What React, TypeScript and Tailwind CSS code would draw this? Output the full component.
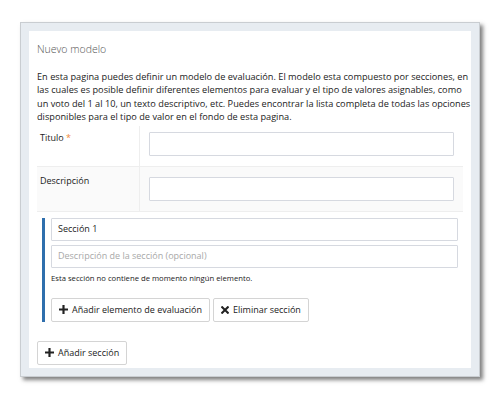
const font = { fontFamily: '"Open Sans", "Noto Sans", sans-serif' };

function PlusIcon() {
  return (
    <svg className="w-[9px] h-[9px]" viewBox="0 0 10 10" fill="#222">
      <path d="M3.8 0h2.4v3.8H10v2.4H6.2V10H3.8V6.2H0V3.8h3.8z" />
    </svg>
  );
}

function TimesIcon() {
  return (
    <svg className="w-[8px] h-[8px]" viewBox="0 0 10 10" stroke="#222" strokeWidth="2.6" strokeLinecap="square">
      <path d="M1.5 1.5l7 7M8.5 1.5l-7 7" />
    </svg>
  );
}

function Button({ icon, label }: { icon: React.ReactNode; label: string }) {
  return (
    <button className="h-[24px] px-[7px] flex items-center gap-[4px] bg-white border border-[#d4d4d4] rounded-[2px] text-[9px] text-[#222]">
      {icon}
      <span>{label}</span>
    </button>
  );
}

export default function App() {
  return (
    <div className="w-[500px] h-[397px] bg-white pt-[22px] pl-[20px]" style={font}>
      <div className="w-[460px] h-[355px] p-[8px] bg-[#e7ecf1] border border-[#c9cdd1] shadow-[3px_3px_4px_rgba(0,0,0,0.5)]">
        <div className="h-full bg-white pl-[8px] pt-[10px]">
          {/* Header */}
          <h1 className="text-[10.5px] leading-[16px] font-light text-[#555]">Nuevo modelo</h1>
          <p className="mt-[13px] w-[436px] text-[9.2px] leading-[13.4px] text-[#222]">
            En esta pagina puedes definir un modelo de evaluación. El modelo esta compuesto por secciones, en
            las cuales es posible definir diferentes elementos para evaluar y el tipo de valores asignables, como
            un voto del 1 al 10, un texto descriptivo, etc. Puedes encontrar la lista completa de todas las opciones
            disponibles para el tipo de valor en el fondo de esta pagina.
          </p>

          {/* Form table */}
          <div className="mt-[2px] w-[426px]">
            <div className="flex h-[41px] border-b border-[#eeeeee]">
              <div className="w-[103px] border-r border-[#eeeeee] pl-[3px] pt-[5px] text-[9px] font-medium text-[#222]">
                Titulo <span className="text-[#f0883a]">*</span>
              </div>
              <div className="flex-1 pl-[9px] pr-[9px] pt-[6px]">
                <div className="h-[24px] border border-[#d6d9e0] rounded-[1px]" />
              </div>
            </div>
            <div className="flex h-[45px] bg-[#fafafa] border-b border-[#eeeeee]">
              <div className="w-[103px] border-r border-[#eeeeee] pl-[3px] pt-[7px] text-[9px] font-medium text-[#222]">
                Descripción
              </div>
              <div className="flex-1 pl-[9px] pr-[9px] pt-[10px]">
                <div className="h-[24px] bg-white border border-[#d6d9e0] rounded-[1px]" />
              </div>
            </div>
          </div>

          {/* Section */}
          <div className="mt-[6px] ml-[5px] w-[416px] flex">
            <div className="w-[3px] bg-[#2f6fad]" />
            <div className="flex-1 pl-[6px]">
              <div className="h-[23px] border border-[#d6d9e0] rounded-[1px] px-[6px] flex items-center text-[9px] text-[#222]">
                Sección 1
              </div>
              <div className="mt-[4px] h-[23px] border border-[#d6d9e0] rounded-[1px] px-[6px] flex items-center text-[9px] text-[#a8a8a8]">
                Descripción de la sección (opcional)
              </div>
              <p className="mt-[4px] text-[7.7px] leading-[12px] text-[#222]">
                Esta sección no contiene de momento ningún elemento.
              </p>
              <div className="mt-[14px] flex gap-[3px]">
                <Button icon={<PlusIcon />} label="Añadir elemento de evaluación" />
                <Button icon={<TimesIcon />} label="Eliminar sección" />
              </div>
            </div>
          </div>

          <div className="mt-[19px]">
            <Button icon={<PlusIcon />} label="Añadir sección" />
          </div>
        </div>
      </div>
    </div>
  );
}
